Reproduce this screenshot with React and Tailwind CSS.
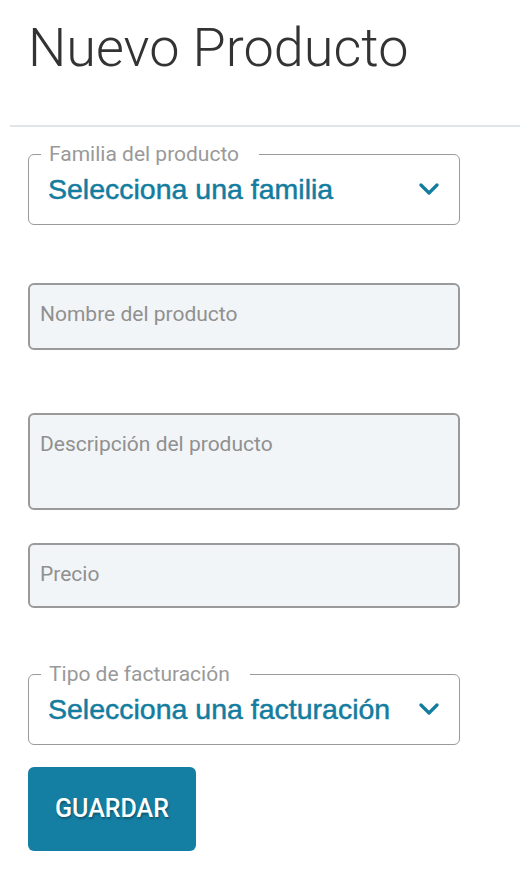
import React, { useState } from "react";

const Chevron = () => (
  <svg width="20" height="12" viewBox="0 0 20 12" className="shrink-0">
    <path d="M2 2 L10 10 L18 2" fill="none" stroke="#137c9f" strokeWidth="3.2" strokeLinecap="round" strokeLinejoin="round" />
  </svg>
);

const SelectField = ({ legend, value }) => (
  <fieldset className="border border-[#9a9a9a] rounded-[6px] px-0 pt-0 pb-[14px] h-[84px] -mt-[13px]">
    <legend className="ml-3 pl-2 pr-5 text-[21px] leading-[26px] text-[#999] font-['Roboto',sans-serif]">
      {legend}
    </legend>
    <div className="flex items-center justify-between pl-[19px] pr-[20px] mt-[6px]">
      <span className="text-[28.5px] leading-[32px] text-[#137c9f] font-['Liberation_Sans',sans-serif] [-webkit-text-stroke:0.5px_#137c9f]">
        {value}
      </span>
      <Chevron />
    </div>
  </fieldset>
);

const Input = ({ placeholder, className }) => (
  <div className={`bg-[#f2f5f7] border-2 border-[#9a9a9a] rounded-[6px] px-[10px] pt-[17px] text-[21px] leading-[24px] text-[#909090] font-['Roboto',sans-serif] ${className}`}>
    {placeholder}
  </div>
);

export default function App() {
  const [familia] = useState("Selecciona una familia");
  const [facturacion] = useState("Selecciona una facturación");

  return (
    <div className="w-[520px] min-h-[876px] bg-white font-['Roboto',sans-serif]">
      <h1 className="pl-[28px] pt-[16px] text-[54px] leading-[64px] font-light text-[#333]">
        Nuevo Producto
      </h1>
      <div className="ml-[10px] mt-[45px] h-[2px] bg-[#dfe5e8]" />

      <div className="pl-[28px] pr-[60px] pt-[27px] flex flex-col">
        <SelectField legend="Familia del producto" value={familia} />
        <Input placeholder="Nombre del producto" className="mt-[58px] h-[67px]" />
        <Input placeholder="Descripción del producto" className="mt-[63px] h-[97px]" />
        <Input placeholder="Precio" className="mt-[33px] h-[65px]" />
        <div className="mt-[66px]">
          <SelectField legend="Tipo de facturación" value={facturacion} />
        </div>
        <div className="mt-[22px]">
          <button className="w-[168px] h-[84px] bg-[#147fa3] rounded-[6px] text-white text-[25px] font-medium font-['Roboto',sans-serif] [text-shadow:1px_2px_2px_rgba(0,0,0,0.3)]">
            GUARDAR
          </button>
        </div>
      </div>
    </div>
  );
}
